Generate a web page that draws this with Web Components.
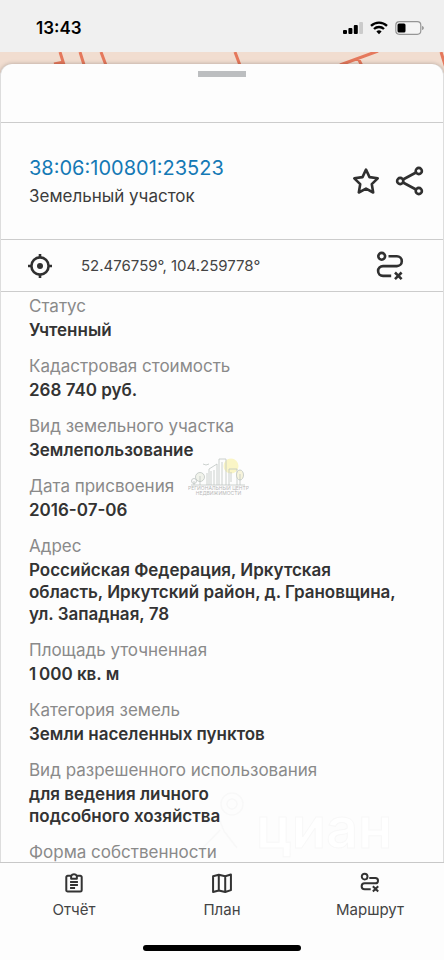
<!DOCTYPE html>
<html lang="ru">
<head>
<meta charset="utf-8">
<meta name="viewport" content="width=device-width, initial-scale=1">
<title>Земельный участок</title>
<style>
  body { margin: 0; font-family: Inter, "Liberation Sans", sans-serif; color: #333; background: #fdfdfd; }
</style>
</head>
<body>
<parcel-screen></parcel-screen>

<script>
const define = (name, html) => {
  const template = document.createElement('template');
  template.innerHTML = html;
  customElements.define(name, class extends HTMLElement {
    constructor() {
      super();
      this.attachShadow({ mode: 'open' }).append(template.content.cloneNode(true));
    }
  });
};

const icons = {
  star: '<path d="M14 2.600l3.500 7.500 8.200 1.200-5.900 5.900 1.400 8.300-7.200-3.900-7.200 3.900 1.400-8.300-5.900-5.900 8.200-1.200z"/>',
  share: '<circle cx="4.200" cy="14" r="3.100"/><circle cx="22.800" cy="4" r="3.100"/><circle cx="22.800" cy="24" r="3.100"/><path d="M7 12.500L20 5.500M7 15.500L20 22.500"/>',
  target: '<circle cx="14" cy="14" r="8.600"/><circle cx="14" cy="14" r="3" fill="currentColor" stroke="none"/><path d="M14 2v4M14 22v4M2 14h4M22 14h4"/>',
  route: '<circle cx="4.700" cy="4.300" r="3.400"/><path d="M11.500 4.300h8.400a4.900 4.900 0 0 1 0 9.800H6a4.900 4.900 0 0 0 0 9.800h8.200M18 20.500l6.600 6.600M24.600 20.500L18 27.100"/>',
  routeSmall: '<circle cx="6.500" cy="5" r="4"/><path d="M13 7h8.500a3.700 3.700 0 0 1 0 7.400H6.500a4.200 4.200 0 0 0 0 8.400H15M18 18.500l7.500 7.500M25.500 18.500L18 26"/>',
  report: '<path d="M10 4H5.200A2 2 0 0 0 3.200 6v18a2 2 0 0 0 2 2h17.600a2 2 0 0 0 2-2V6a2 2 0 0 0-2-2H18c-1-1.600-2.400-2.200-4-2.200S11 2.400 10 4zM10 4v4h8V4M8.500 12.500h11M8.500 16.700h11M8.500 21h7"/>',
  map: '<path d="M1.500 4.500l8-2 9 2 8-2.500v22L18.500 26.500l-9-2-8 2zM9.500 2.500v22M18.500 4.500v22"/>'
};
customElements.define('line-icon', class extends HTMLElement {
  connectedCallback() {
    if (this.shadowRoot) return;
    this.attachShadow({ mode: 'open' }).innerHTML = `
      <style>
        :host { display: block; width: var(--icon-size, 28px); height: var(--icon-size, 28px); }
        svg { display: block; width: 100%; height: 100%; overflow: visible; fill: none; stroke: currentColor; stroke-width: var(--icon-stroke, 2.6); stroke-linejoin: round; }
      </style>
      <svg viewBox="0 0 28 28" aria-hidden="true">${icons[this.getAttribute('name')]}</svg>`;
  }
});

define('status-bar', `
  <style>
    :host { display: flex; align-items: center; justify-content: space-between; height: 52px; padding: 4px 20px 0 36px; box-sizing: border-box; background: #f0f0f0; color: #000; flex: none; }
    time { font-size: 17px; line-height: 22px; font-weight: 600; }
    .signals { display: flex; align-items: center; gap: 7px; }
    svg { display: block; }
  </style>
  <time>13:43</time>
  <div class="signals">
    <svg width="20" height="14" viewBox="0 0 20 14" aria-label="Сигнал"><rect x="0" y="9" width="4" height="4" rx="1"/><rect x="5.400" y="7" width="4" height="6" rx="1"/><rect x="10.800" y="4" width="4" height="9" rx="1"/><rect x="16.200" y="1" width="3.800" height="12" rx="1" fill="#cbcbcb"/></svg>
    <svg width="18" height="14" viewBox="0 0 18 14" aria-label="Wi-Fi" fill="none" stroke="#000" stroke-width="2.300"><path d="M1 4.800a11.500 11.500 0 0 1 16 0M4 8a7.200 7.200 0 0 1 10 0"/><path d="M9 13.200l-2.600-2.600a3.700 3.700 0 0 1 5.200 0z" fill="#000" stroke="none"/></svg>
    <svg width="29" height="14" viewBox="0 0 29 14" aria-label="Батарея"><rect x=".8" y=".7" width="25" height="12.600" rx="3.500" fill="#f5f5f5" stroke="#969696" stroke-width="1.200"/><rect x="2.500" y="2.500" width="8" height="9" rx="1.500"/><path d="M27.200 5v4c1-.4 1.500-1.100 1.500-2s-.5-1.600-1.500-2z" fill="#888"/></svg>
  </div>`);

define('map-strip', `
  <style>
    :host { display: block; height: 30px; margin-bottom: -18px; background: #f1ddd0; flex: none; overflow: hidden; }
    svg { display: block; width: 100%; height: 30px; }
  </style>
  <svg viewBox="0 0 444 30" preserveAspectRatio="none" fill="none" stroke="#e5785c" stroke-width="3" aria-hidden="true">
    <path d="M60 0l5 16M54 12l10-2M80 0l5 16M101 0l6 16M235 0l6 16M340 13l38-14M358 6l4 8M441 0l5 16"/>
  </svg>`);

define('parcel-header', `
  <style>
    :host { display: flex; align-items: center; justify-content: space-between; padding: 31px 19px 31px 28px; border-top: 1px solid #ccc; border-bottom: 1px solid #ccc; }
    .title { display: grid; gap: 2px; }
    a { font-size: 20px; line-height: 28px; color: #1479b5; text-decoration: none; }
    span { font-size: 17px; line-height: 24px; color: #3c3c3c; }
    .actions { display: flex; gap: 16px; }
    button { border: 0; padding: 0; background: none; color: #303030; }
  </style>
  <div class="title"><a href="#parcel"><slot name="number"></slot></a><span><slot></slot></span></div>
  <div class="actions">
    <button aria-label="В избранное"><line-icon name="star"></line-icon></button>
    <button aria-label="Поделиться"><line-icon name="share"></line-icon></button>
  </div>`);

define('coordinate-row', `
  <style>
    :host { display: flex; align-items: center; height: 51px; padding: 0 38px 0 25px; border-bottom: 1px solid #ccc; color: #303030; }
    span { flex: 1; margin-left: 27px; font-size: 15px; line-height: 20px; color: #444; }
    button { border: 0; padding: 0; background: none; color: inherit; }
  </style>
  <line-icon name="target"></line-icon>
  <span><slot></slot></span>
  <button aria-label="Построить маршрут"><line-icon name="route"></line-icon></button>`);

define('property-item', `
  <style>
    :host { display: grid; gap: 1px; }
    .label { font-size: 17px; line-height: 24px; color: #8a8a8a; }
    .value { font-size: 17px; line-height: 22px; font-weight: 600; font-optical-sizing: none; color: #333; }
  </style>
  <div class="label"><slot name="label"></slot></div>
  <div class="value"><slot></slot></div>`);

define('agency-mark', `
  <style>
    :host { display: grid; justify-items: center; width: 60px; color: #a2a2a2; opacity: .75; pointer-events: none; }
    svg { display: block; }
    span { font-size: 5px; line-height: 5px; white-space: nowrap; }
  </style>
  <svg width="54" height="28" viewBox="0 0 54 28" fill="none" stroke="#a9b3ae" stroke-width=".8" aria-hidden="true">
    <circle cx="40" cy="8" r="7.500" fill="#faf3b4" stroke="none"/>
    <path d="M0 27h54"/>
    <circle cx="9" cy="19" r="4.500" fill="#edf0e5"/><path d="M9 18v9"/>
    <circle cx="3" cy="23" r="2.500"/><path d="M3 23v4M18 27V11l8-5v21M16 27V15M20 13v14M23 12v15M28 27V1h7v26M31 4v23M38 27V11h8v16M40 14v10"/>
    <ellipse cx="49" cy="17" rx="3.500" ry="5" fill="#f5f2d2"/><path d="M49 16v11M12 6l3 1 3-1"/>
  </svg>
  <span>РЕГИОНАЛЬНЫЙ ЦЕНТР</span><span>НЕДВИЖИМОСТИ</span>`);

define('cian-mark', `
  <style>
    :host { display: flex; align-items: flex-end; gap: 12px; color: #fff; pointer-events: none; }
    svg { display: block; overflow: visible; }
    span { font-size: 56px; line-height: 60px; font-weight: 600; -webkit-text-stroke: 1px #f8f8f8; }
  </style>
  <svg width="46" height="66" viewBox="0 0 46 66" fill="none" stroke="#f8f8f8" stroke-width="1.500" aria-hidden="true">
    <circle cx="34" cy="12" r="11"/><circle cx="34" cy="12" r="5"/><path d="M8 31l13-4 5 12 13 17M22 38L2 59"/>
  </svg>
  <span>циан</span>`);

define('nav-item', `
  <style>
    :host { display: block; --icon-size: 20px; --icon-stroke: 2.8; }
    button { display: grid; justify-items: center; gap: 6px; width: 100%; padding: 0; border: 0; background: none; font: inherit; font-size: 15px; line-height: 22px; color: #444; }
    ::slotted(line-icon) { color: #333; }
  </style>
  <button><slot name="icon"></slot><slot></slot></button>`);

define('bottom-nav', `
  <style>
    :host { display: block; position: relative; flex: none; border-top: 1px solid #c8c8c8; background: #fdfdfd; }
    nav { display: grid; grid-template-columns: repeat(3, 1fr); padding: 10px 0 24px; }
    .home { width: 158px; height: 6px; margin: 0 auto 9px; border-radius: 3px; background: #000; }
  </style>
  <nav>
    <nav-item><line-icon slot="icon" name="report"></line-icon>Отчёт</nav-item>
    <nav-item><line-icon slot="icon" name="map"></line-icon>План</nav-item>
    <nav-item><line-icon slot="icon" name="routeSmall"></line-icon>Маршрут</nav-item>
  </nav>
  <div class="home"></div>`);

define('parcel-screen', `
  <style>
    :host { display: flex; flex-direction: column; height: 100vh; }
    main { position: relative; flex: 1; min-height: 0; display: flex; flex-direction: column; border: solid #ddd; border-width: 0 1px; border-radius: 12px 12px 0 0; background: #fdfdfd; box-shadow: 0 0 4px #0004; }
    main > * { flex: none; }
    .grip { height: 58px; padding-top: 7px; box-sizing: border-box; }
    .grip i { display: block; width: 48px; height: 6px; margin: 0 auto; background: #bcbec0; }
    .list { position: relative; z-index: 1; flex: 1; min-height: 0; display: flex; flex-direction: column; gap: 13px; padding: 2px 28px 0; overflow: auto; scrollbar-width: none; }
    .list > * { flex: none; }
    agency-mark { position: absolute; top: 394px; left: 187px; }
    cian-mark { position: absolute; bottom: 4px; left: 197px; }
  </style>
  <status-bar></status-bar>
  <map-strip></map-strip>
  <main>
    <div class="grip"><i></i></div>
    <parcel-header><span slot="number">38:06:100801:23523</span>Земельный участок</parcel-header>
    <coordinate-row>52.476759°, 104.259778°</coordinate-row>
    <div class="list">
      <property-item><span slot="label">Статус</span>Учтенный</property-item>
      <property-item><span slot="label">Кадастровая стоимость</span>268 740 руб.</property-item>
      <property-item><span slot="label">Вид земельного участка</span>Землепользование</property-item>
      <property-item><span slot="label">Дата присвоения</span>2016-07-06</property-item>
      <property-item><span slot="label">Адрес</span>Российская Федерация, Иркутская<br>область, Иркутский район, д. Грановщина,<br>ул. Западная, 78</property-item>
      <property-item><span slot="label">Площадь уточненная</span>1&#8201;000 кв. м</property-item>
      <property-item><span slot="label">Категория земель</span>Земли населенных пунктов</property-item>
      <property-item><span slot="label">Вид разрешенного использования</span>для ведения личного<br>подсобного хозяйства</property-item>
      <property-item><span slot="label">Форма собственности</span>&nbsp;</property-item>
    </div>
    <agency-mark></agency-mark>
    <cian-mark></cian-mark>
  </main>
  <bottom-nav></bottom-nav>`);
</script>
</body>
</html>
